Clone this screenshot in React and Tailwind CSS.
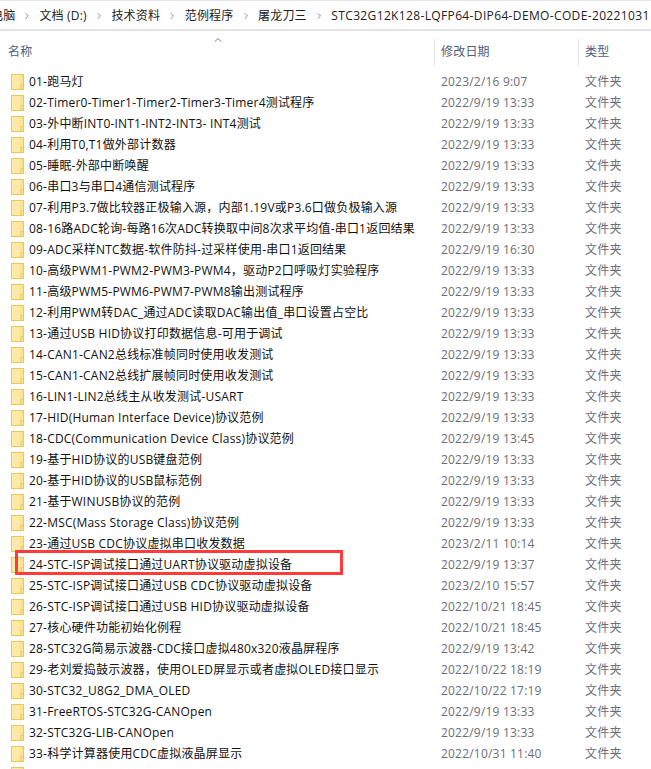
import { ChevronRight, ChevronUp } from 'lucide-react'

const CRUMBS = ['文档 (D:)', '技术资料', '范例程序', '屠龙刀三']

const FOLDERS = [
  ['01-跑马灯', '2023/2/16 9:07'],
  ['02-Timer0-Timer1-Timer2-Timer3-Timer4测试程序', '2022/9/19 13:33'],
  ['03-外中断INT0-INT1-INT2-INT3- INT4测试', '2022/9/19 13:33'],
  ['04-利用T0,T1做外部计数器', '2022/9/19 13:33'],
  ['05-睡眠-外部中断唤醒', '2022/9/19 13:33'],
  ['06-串口3与串口4通信测试程序', '2022/9/19 13:33'],
  ['07-利用P3.7做比较器正极输入源，内部1.19V或P3.6口做负极输入源', '2022/9/19 13:33'],
  ['08-16路ADC轮询-每路16次ADC转换取中间8次求平均值-串口1返回结果', '2022/9/19 13:33'],
  ['09-ADC采样NTC数据-软件防抖-过采样使用-串口1返回结果', '2022/9/19 16:30'],
  ['10-高级PWM1-PWM2-PWM3-PWM4，驱动P2口呼吸灯实验程序', '2022/9/19 13:33'],
  ['11-高级PWM5-PWM6-PWM7-PWM8输出测试程序', '2022/9/19 13:33'],
  ['12-利用PWM转DAC_通过ADC读取DAC输出值_串口设置占空比', '2022/9/19 13:33'],
  ['13-通过USB HID协议打印数据信息-可用于调试', '2022/9/19 13:33'],
  ['14-CAN1-CAN2总线标准帧同时使用收发测试', '2022/9/19 13:33'],
  ['15-CAN1-CAN2总线扩展帧同时使用收发测试', '2022/9/19 13:33'],
  ['16-LIN1-LIN2总线主从收发测试-USART', '2022/9/19 13:33'],
  ['17-HID(Human Interface Device)协议范例', '2022/9/19 13:33'],
  ['18-CDC(Communication Device Class)协议范例', '2022/9/19 13:45'],
  ['19-基于HID协议的USB键盘范例', '2022/9/19 13:33'],
  ['20-基于HID协议的USB鼠标范例', '2022/9/19 13:33'],
  ['21-基于WINUSB协议的范例', '2022/9/19 13:33'],
  ['22-MSC(Mass Storage Class)协议范例', '2022/9/19 13:33'],
  ['23-通过USB CDC协议虚拟串口收发数据', '2023/2/11 10:14'],
  ['24-STC-ISP调试接口通过UART协议驱动虚拟设备', '2022/9/19 13:37'],
  ['25-STC-ISP调试接口通过USB CDC协议驱动虚拟设备', '2023/2/10 15:57'],
  ['26-STC-ISP调试接口通过USB HID协议驱动虚拟设备', '2022/10/21 18:45'],
  ['27-核心硬件功能初始化例程', '2022/10/21 18:45'],
  ['28-STC32G简易示波器-CDC接口虚拟480x320液晶屏程序', '2022/9/19 13:42'],
  ['29-老刘爱捣鼓示波器，使用OLED屏显示或者虚拟OLED接口显示', '2022/10/22 18:19'],
  ['30-STC32_U8G2_DMA_OLED', '2022/10/22 17:19'],
  ['31-FreeRTOS-STC32G-CANOpen', '2022/9/19 13:33'],
  ['32-STC32G-LIB-CANOpen', '2022/9/19 13:33'],
  ['33-科学计算器使用CDC虚拟液晶屏显示', '2022/10/31 11:40'],
  ['', ''],
]

function FolderIcon() {
  return (
    <svg width="13" height="16" viewBox="0 0 13 16" className="shrink-0">
      <rect x="0.5" y="0.5" width="12" height="15" fill="#fde28f" stroke="#ecc658" />
      <rect x="1" y="1" width="8" height="14" fill="#fee9a8" />
      <path d="M10 15.5V10.5H12.5" fill="none" stroke="#ecc658" />
    </svg>
  )
}

function FolderRow({ name, date }) {
  return (
    <div className="flex h-[21px] shrink-0 items-center">
      <div className="flex w-[434px] shrink-0 items-center pl-[11px]">
        <FolderIcon />
        <span className="ml-[5px] whitespace-nowrap text-[#111]">{name}</span>
      </div>
      <div className="w-[144px] shrink-0 pl-[7px] text-[#6d6d78]">{date}</div>
      {name && <div className="pl-[7px] text-[#6d6d78]">文件夹</div>}
    </div>
  )
}

export default function App() {
  return (
    <div
      className="relative flex h-[769px] w-[651px] flex-col overflow-hidden bg-white text-[12px] leading-none tracking-[0.2px]"
      style={{ fontFamily: '"Open Sans", "Noto Sans CJK SC", sans-serif' }}
    >
      {/* Address bar */}
      <div className="flex h-[31px] shrink-0 items-center overflow-hidden whitespace-nowrap border-t border-b-2 border-t-[#e5e5e5] border-b-[#e3e3e3] pt-px text-[#222]">
        <span className="ml-[-9px]">电脑</span>
        <ChevronRight className="mx-[7px] h-[10px] w-[10px] shrink-0 text-[#777]" />
        {CRUMBS.map((crumb) => (
          <div key={crumb} className="flex items-center">
            <span>{crumb}</span>
            <ChevronRight className="mx-[7px] h-[10px] w-[10.5px] shrink-0 text-[#777]" />
          </div>
        ))}
        <span className="tracking-[0.36px]">STC32G12K128-LQFP64-DIP64-DEMO-CODE-20221031</span>
      </div>

      {/* Column headers */}
      <div className="relative flex h-[35px] shrink-0 items-center pt-[7px] text-[#4c607a]">
        <ChevronUp className="absolute left-[212px] top-[3px] h-[12px] w-[12px] text-[#777]" />
        <div className="w-[434px] shrink-0 pl-[8px]">名称</div>
        <div className="flex h-[27px] w-[144px] shrink-0 items-center border-l border-[#e5e5e5] pl-[6px]">修改日期</div>
        <div className="flex h-[27px] items-center border-l border-[#e5e5e5] pl-[6px]">类型</div>
      </div>

      {/* File list */}
      <div className="flex flex-col pt-[5px]">
        {FOLDERS.map(([name, date], i) => (
          <FolderRow key={i} name={name} date={date} />
        ))}
      </div>

      {/* Red annotation */}
      <div className="absolute left-[15px] top-[550px] h-[25px] w-[328px] border-[3px] border-[#ff3b3b]" />
    </div>
  )
}
